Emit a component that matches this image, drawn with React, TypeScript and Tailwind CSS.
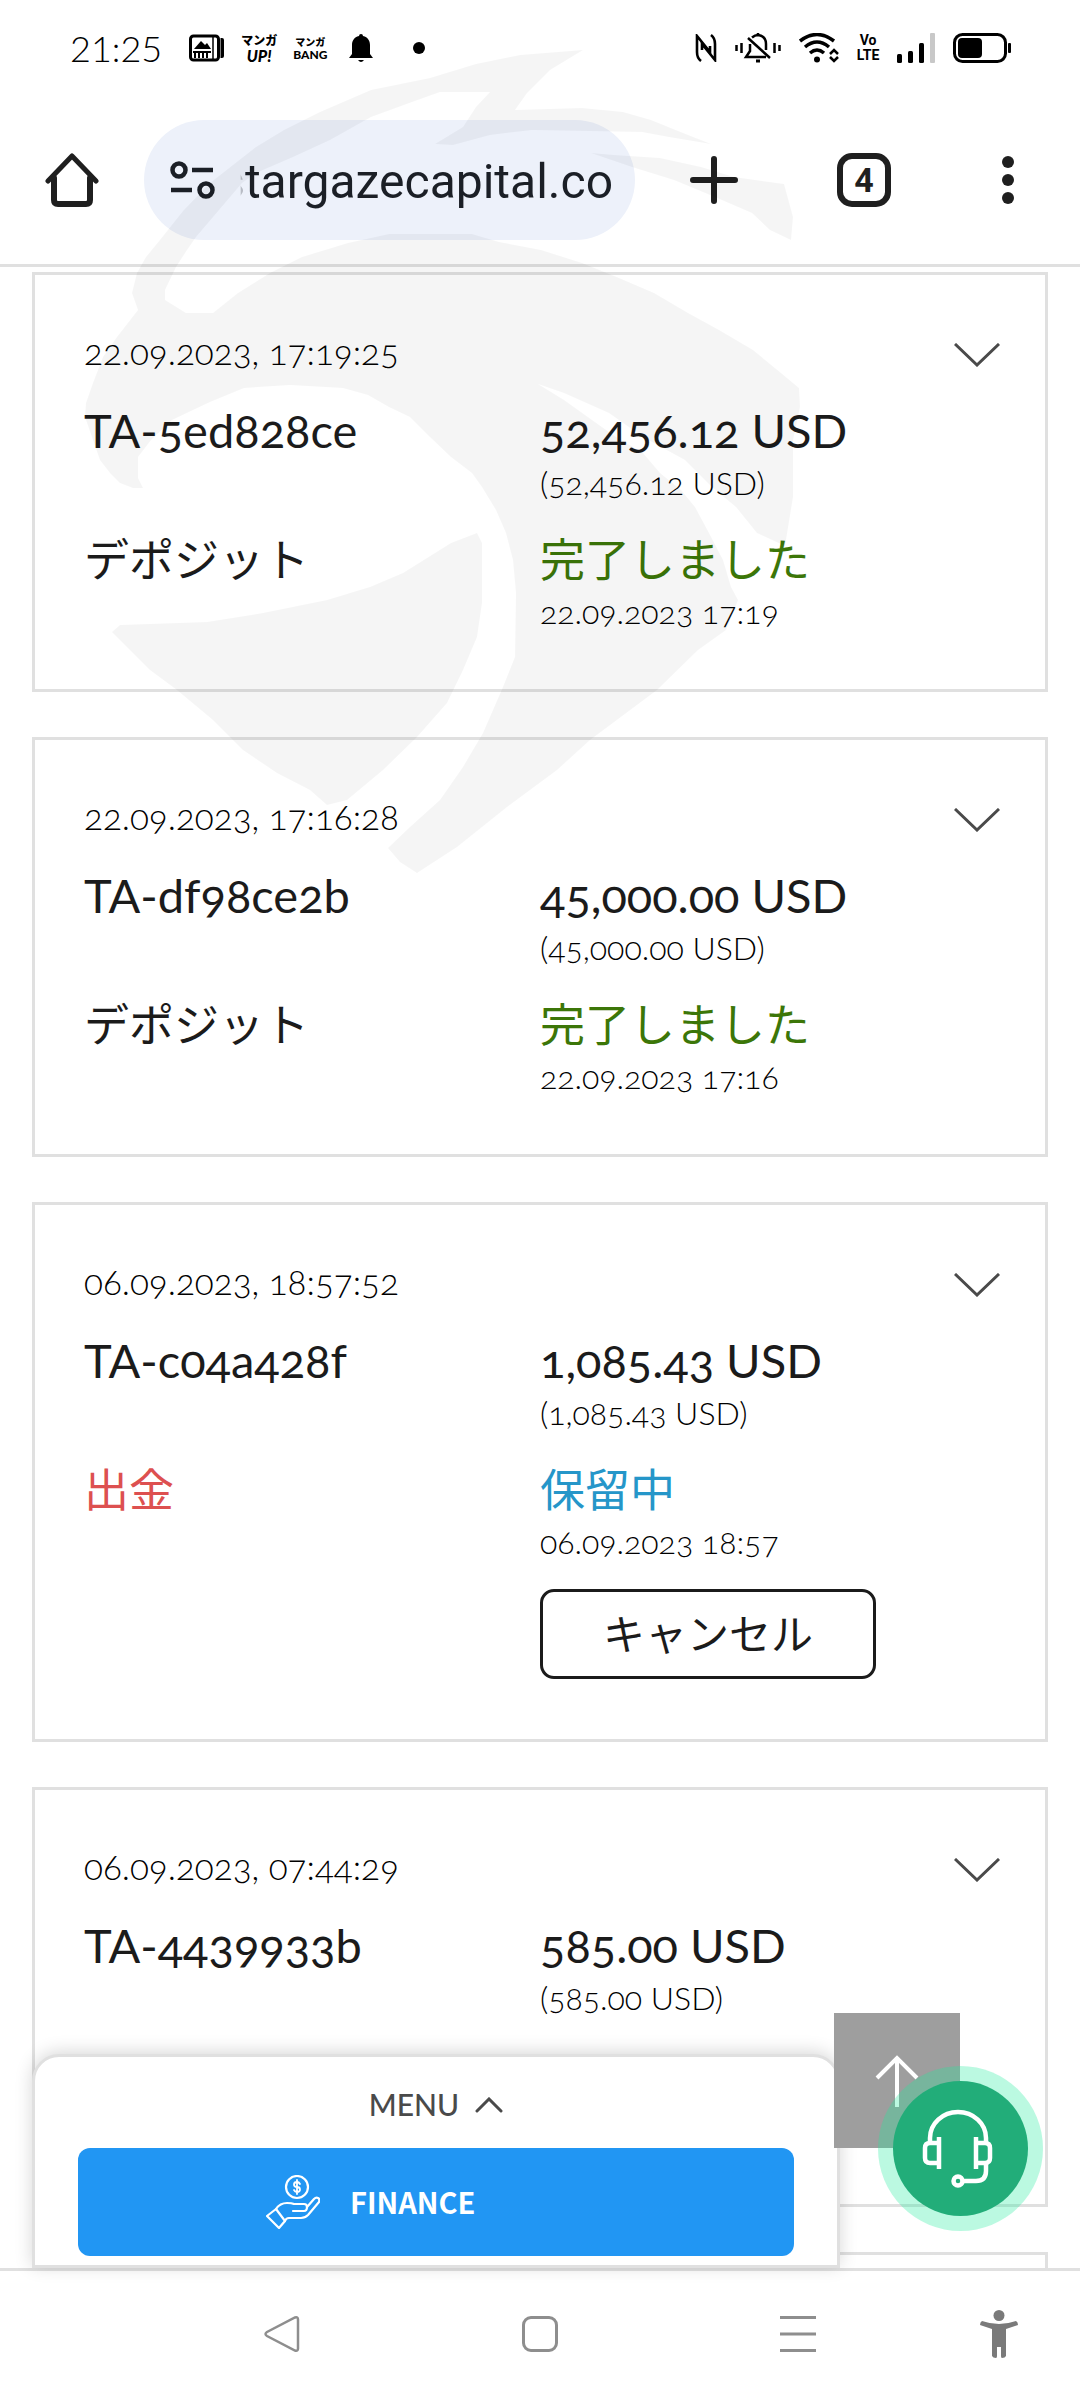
import type { ReactNode } from "react";

type Transaction = {
  date: string;
  id: string;
  amount: string;
  type?: string;
  typeColor?: string;
  status?: string;
  statusColor?: string;
  updated?: string;
  cancelable?: boolean;
};

const transactions: Transaction[] = [
  {
    date: "22.09.2023, 17:19:25",
    id: "TA-5ed828ce",
    amount: "52,456.12 USD",
    type: "デポジット",
    status: "完了しました",
    statusColor: "text-[#3c7608]",
    updated: "22.09.2023 17:19",
  },
  {
    date: "22.09.2023, 17:16:28",
    id: "TA-df98ce2b",
    amount: "45,000.00 USD",
    type: "デポジット",
    status: "完了しました",
    statusColor: "text-[#3c7608]",
    updated: "22.09.2023 17:16",
  },
  {
    date: "06.09.2023, 18:57:52",
    id: "TA-c04a428f",
    amount: "1,085.43 USD",
    type: "出金",
    typeColor: "text-[#dd5050]",
    status: "保留中",
    statusColor: "text-[#2596c9]",
    updated: "06.09.2023 18:57",
    cancelable: true,
  },
  {
    date: "06.09.2023, 07:44:29",
    id: "TA-4439933b",
    amount: "585.00 USD",
  },
];

function StatusBar() {
  return (
    <div className="flex h-24 items-center justify-between pr-[69px] pl-[70px] text-black">
      <div className="flex items-center">
        <span className="text-[36px] leading-none font-light">21:25</span>
        <svg className="ml-[27px] h-7 w-9" viewBox="0 0 36 28" fill="none">
          <rect x="1.5" y="2" width="28" height="24" rx="3" stroke="currentColor" strokeWidth="3" />
          <path d="M24 2v24" stroke="currentColor" strokeWidth="1.5" />
          <path d="M31.500 4h1.500q2 0 2 2v16q0 2-2 2h-1.500z" fill="currentColor" />
          <path d="M5 15l7-8 4 4 2-2 4 6z" fill="currentColor" />
          <path d="M4 18h18M6 18v6M10 18v6M14 18v6M18 18v6" stroke="currentColor" strokeWidth="2" />
        </svg>
        <div className="ml-4 flex flex-col items-center font-black">
          <span className="font-['Noto_Sans_CJK_JP',sans-serif] text-[12px] leading-[14px]">マンガ</span>
          <span className="text-[16px] leading-[17px] italic">UP!</span>
        </div>
        <div className="ml-4 flex flex-col items-center font-black">
          <span className="font-['Noto_Sans_CJK_JP',sans-serif] text-[10px] leading-[12px]">マンガ</span>
          <span className="text-[12px] leading-[13px]">BANG</span>
        </div>
        <svg className="ml-[22px] h-[30px] w-6" viewBox="0 0 24 30" fill="currentColor">
          <path d="M10 3a2 2 0 0 1 4 0c5 1 7 5 7 9v9l3 4H0l3-4v-9c0-4 2-8 7-9z" />
          <path d="M9 27h6q-3 4-6 0z" />
        </svg>
        <span className="ml-10 size-3 rounded-full bg-black" />
      </div>

      <div className="flex items-center gap-[18px]">
        {/* NFC */}
        <svg className="h-7 w-[22px]" viewBox="0 0 22 28" fill="none" stroke="currentColor" strokeWidth="2.600">
          <path d="M6 27q-4-3-4-9V2L15 18v-6" />
          <path d="M16 1q4 3 4 9v16L7 10v6" />
        </svg>
        {/* Vibrate, ringer off */}
        <svg className="h-[30px] w-[46px]" viewBox="0 0 46 30" fill="none" stroke="currentColor" strokeWidth="2.500">
          <path d="M1.500 12v6M6.500 10v10M39.500 10v10M44.500 12v6" />
          <path d="M13 5l22 20" />
          <path d="M17 4.500q3-2.500 6-2.500 8 1 8 9v6" />
          <path d="M15 11v7l-4 6h20" />
          <path d="M23 0v3" />
          <path d="M21 28h4" strokeWidth="3" />
        </svg>
        <svg className="h-[30px] w-10" viewBox="0 0 40 30" fill="none" stroke="currentColor" strokeWidth="3.500">
          <path d="M1 8Q18-5 35 8M6 14Q18 4 30 14M11 20Q18 14 25 20" />
          <circle cx="18" cy="26.500" r="3" fill="currentColor" stroke="none" />
          <path d="M31 21l4-4 4 4M31 24l4 4 4-4" strokeWidth="2.500" />
        </svg>
        <div className="flex w-[22px] flex-col items-center font-['Roboto',sans-serif] text-[14px] leading-[15px] font-bold">
          <span>Vo</span>
          <span>LTE</span>
        </div>
        <svg className="h-[30px] w-[38px]" viewBox="0 0 38 30" fill="currentColor">
          <rect x="0" y="21" width="5" height="9" rx="1.500" />
          <rect x="11" y="18" width="5" height="12" rx="1.500" />
          <rect x="22" y="10" width="5" height="20" rx="1.500" />
          <rect x="33" y="0" width="5" height="30" rx="1" fill="#c8c8c8" />
        </svg>
        <svg className="h-[30px] w-[58px]" viewBox="0 0 58 30" fill="currentColor">
          <rect x="1.500" y="1.500" width="51" height="27" rx="8" fill="none" stroke="currentColor" strokeWidth="3" />
          <rect x="5" y="5" width="24" height="20" rx="4" />
          <rect x="55" y="10" width="3" height="10" rx="1" />
        </svg>
      </div>
    </div>
  );
}

function Toolbar() {
  return (
    <div className="flex h-[168px] items-center text-[#1f1f1f]">
      <button aria-label="Home" className="flex w-36 justify-center">
        <svg className="size-[54px]" viewBox="0 0 54 54" fill="none" stroke="currentColor" strokeLinecap="round" strokeLinejoin="round">
          <path d="M3 28L27 3l24 25" strokeWidth="5" />
          <path d="M9 25v22q0 4 4 4h28q4 0 4-4V25" strokeWidth="6" />
        </svg>
      </button>
      <div className="flex h-[120px] min-w-0 flex-1 items-center gap-6 rounded-full bg-[#edf1fa] pr-[22px] pl-[26px]">
        <button aria-label="Site settings">
          <svg className="h-[38px] w-[46px]" viewBox="0 0 46 38" fill="none" stroke="#1b1f26" strokeWidth="4.500">
            <circle cx="9" cy="9" r="6.500" />
            <circle cx="36" cy="29" r="6.500" />
            <path d="M22 9h21M1 29h21" />
          </svg>
        </button>
        <input
          aria-label="Address"
          dir="rtl"
          readOnly
          value="stargazecapital.co"
          className="h-16 w-full min-w-0 [mask-image:linear-gradient(to_right,transparent,black_6px)] pt-[3px] font-['Roboto',sans-serif] text-[48px] text-[#1b1f26] outline-none"
        />
      </div>
      <button aria-label="New tab" className="flex w-[158px] justify-center">
        <svg className="size-12" viewBox="0 0 48 48" stroke="currentColor" strokeWidth="6" strokeLinecap="round">
          <path d="M24 3v42M3 24h42" />
        </svg>
      </button>
      <button aria-label="Tabs" className="flex w-[142px] justify-center">
        <span className="flex size-[54px] items-center justify-center rounded-[15px] border-[6px] border-[#1f1f1f] font-['Roboto',sans-serif] text-[34px] leading-none font-bold">
          4
        </span>
      </button>
      <button aria-label="More" className="flex w-[145px] flex-col items-center gap-[6px]">
        <span className="size-3 rounded-full bg-[#1f1f1f]" />
        <span className="size-3 rounded-full bg-[#1f1f1f]" />
        <span className="size-3 rounded-full bg-[#1f1f1f]" />
      </button>
    </div>
  );
}

function TransactionCard({ tx }: { tx: Transaction }) {
  return (
    <article className="min-h-[420px] border-[3px] border-[#e0e0e0] px-[49px] pt-[54px] pb-[53px] text-[#1b1b1b] oldstyle-nums">
      <div className="flex h-12 items-start justify-between">
        <time className="text-[35px] leading-[44px] font-light text-black">{tx.date}</time>
        <button aria-label="Expand" className="-mr-1 pt-[14px]">
          <svg className="h-6 w-[46px]" viewBox="0 0 46 24" fill="none" stroke="#4a4a4a" strokeWidth="3">
            <path d="M1 1l22 21L45 1" />
          </svg>
        </button>
      </div>
      <div className="mt-6 grid grid-cols-2">
        <p className="text-[47px] leading-[58px]">{tx.id}</p>
        <div>
          <p className="text-[47px] leading-[58px]">{tx.amount}</p>
          <p className="text-[32px] leading-[48px] font-light text-black">({tx.amount})</p>
        </div>
      </div>
      {tx.status && (
        <div className="mt-[21px] grid grid-cols-2">
          <p className={`font-['Noto_Sans_CJK_JP',sans-serif] text-[45px] leading-[60px] ${tx.typeColor ?? ""}`}>
            {tx.type}
          </p>
          <div>
            <p className={`font-['Noto_Sans_CJK_JP',sans-serif] text-[45px] leading-[60px] ${tx.statusColor ?? ""}`}>
              {tx.status}
            </p>
            <p className="text-[32px] leading-[48px] font-light text-black">{tx.updated}</p>
            {tx.cancelable && (
              <button className="mt-[23px] mb-[7px] flex h-[90px] w-[336px] items-center justify-center rounded-[14px] border-[3px] border-[#1b1b1b] pb-[6px] font-['Noto_Sans_CJK_JP',sans-serif] text-[42px]">
                キャンセル
              </button>
            )}
          </div>
        </div>
      )}
    </article>
  );
}

function MenuSheet() {
  return (
    <div className="absolute right-[240px] bottom-0 left-8 rounded-t-[27px] border-[3px] border-[#e0e0e0] bg-white px-[43px] pb-[9px] shadow-[0_-2px_18px_rgba(0,0,0,0.16)]">
      <button className="flex h-[91px] w-full items-center justify-center gap-4 pt-1 text-[30px] font-medium text-[#4a4a4a]">
        MENU
        <svg className="h-4 w-7" viewBox="0 0 28 16" fill="none" stroke="currentColor" strokeWidth="3" strokeLinecap="round">
          <path d="M2 14L14 2l12 12" />
        </svg>
      </button>
      <button className="flex h-[108px] w-full items-center gap-[30px] rounded-[12px] bg-[#2196f3] pl-[188px] text-white">
        <svg className="size-[54px]" viewBox="0 0 54 54" fill="none" stroke="currentColor" strokeWidth="2.200" strokeLinejoin="round" strokeLinecap="round">
          <circle cx="31" cy="12" r="11" />
          <path d="M34 9q-1-2-3-2-3 0-3 2.500t3 2.500q3 0 3 2.500t-3 2.500q-2 0-3-2M31 5v14" strokeWidth="1.800" />
          <path d="M1 41l9-7 9 12-6 7z" />
          <path d="M10 34q4-6 11-6 5 0 7 1h10q3 0 3 3 0 4-3 4H27" />
          <path d="M41 32l7-8q2-2 4-1t1 4L42 40q-3 3-7 3H23q-3 0-4 3" />
        </svg>
        <span className="font-['Noto_Sans_CJK_JP',sans-serif] text-[29px] font-bold">FINANCE</span>
      </button>
    </div>
  );
}

function SupportButton() {
  return (
    <button
      aria-label="Support"
      className="absolute right-[37px] bottom-[37px] flex size-[165px] items-center justify-center rounded-full bg-[#1deb9a]/30"
    >
      <span className="flex size-[135px] items-center justify-center rounded-full bg-[#22ad79]">
        <svg className="size-[135px]" viewBox="0 0 135 135" fill="none" stroke="white" strokeWidth="4.500" strokeLinejoin="round">
          <path d="M37 62v-5a28 26 0 0 1 56 0v5" />
          <path d="M46 56v32M83 56v32" />
          <path d="M46 62h-9q-5 0-5 5v10q0 5 5 5h9M83 62h9q5 0 5 5v10q0 5-5 5h-9" />
          <path d="M93 83v7q0 10-10 10H70" />
          <circle cx="65" cy="100" r="4.500" />
        </svg>
      </span>
    </button>
  );
}

function NavButton({ label, children }: { label: string; children: ReactNode }) {
  return (
    <button aria-label={label} className="flex items-center justify-center">
      {children}
    </button>
  );
}

function NavigationBar() {
  return (
    <nav className="grid h-[132px] shrink-0 grid-cols-[153fr_258fr_258fr_258fr_143fr_10fr] border-t-[3px] border-[#e0e0e0] bg-white pb-1 text-[#8e8e8e]">
      <span />
      <NavButton label="Back">
        <svg className="size-9" viewBox="0 0 36 36" fill="none" stroke="currentColor" strokeWidth="2.500">
          <path d="M31 1.500q3-1 3 2v29q0 3-3 2L3 20q-3-2 0-4z" />
        </svg>
      </NavButton>
      <NavButton label="Home screen">
        <span className="size-9 rounded-[9px] border-[3px] border-[#8e8e8e]" />
      </NavButton>
      <NavButton label="Recents">
        <svg className="size-9" viewBox="0 0 36 36" stroke="currentColor" strokeWidth="3">
          <path d="M0 1.500h36M0 18h36M0 34.500h36" />
        </svg>
      </NavButton>
      <NavButton label="Accessibility">
        <svg className="h-12 w-[38px]" viewBox="0 0 38 48" fill="#7a7a7a">
          <circle cx="19" cy="5.500" r="5.500" />
          <path d="M2 11q17 6 34 0 2 1 2 4l-12 4v27q-1 2-4 2-1 0-1-2v-9h-4v9q0 2-1 2-3 0-4-2V19L0 15q0-3 2-4z" />
        </svg>
      </NavButton>
    </nav>
  );
}

// Hawk head emblem, laid over the top of the page
function Watermark() {
  return (
    <svg
      aria-hidden="true"
      className="pointer-events-none absolute top-0 left-0 w-full"
      viewBox="0 0 1080 900"
      fill="black"
      fillOpacity="0.038"
    >
      <path d="M583 50L520 55L476 64L430 78L371 90L320 112L284 130L256 147L210 183L183 211L160 240L146 257L137 273L132 293L138 310L117 337L103 357L93 383L86 403L85 417L93 440L100 460L110 473L120 483L133 488L143 488L138 478L138 457L151 440L172 420L193 410L210 402L244 388L290 385L343 388L368 395L389 407L410 417L430 437L451 457L472 473L482 487L496 510L506 533L513 560L516 593L515 657L503 687L483 733L463 767L440 800L410 827L388 848L400 862L417 873L457 847L507 807L557 770L590 740L657 690L698 650L726 630L738 600L731 587L723 560L709 533L695 507L681 490L660 473L643 453L616 437L592 420L564 400L538 384L564 393L609 413L643 437L685 460L712 487L736 507L757 533L785 546L793 497L793 440L800 407L799 388L781 373L753 350L719 330L688 313L654 293L619 278L582 263L541 250L499 242L472 234L389 234L348 243L302 257L270 273L238 293L213 313L186 313L165 300L165 290L176 267L187 250L196 237L219 210L242 183L256 173L293 157L330 140L371 117L412 102L440 92L490 92L476 107L463 127L435 144L453 145L490 135L532 130L642 132L669 137L711 144L683 133L651 120L623 112L582 108L515 110L527 93L550 70Z" />
      <path d="M591 153L614 155L660 158L701 167L734 177L784 184L793 217L791 240L770 230L752 213L715 197L674 180L632 167Z" />
      <path d="M112 632L120 625L207 622L263 613L327 600L370 587L403 573L451 543L477 533L482 543L482 603L477 637L463 670L447 703L417 737L383 770L347 800L327 805L310 790L277 773L243 750L213 720L177 690L150 670L130 650Z" />
    </svg>
  );
}

export default function App() {
  return (
    <div className="relative flex h-screen flex-col overflow-hidden bg-white font-['Lato',sans-serif]">
      <header className="shrink-0 border-b-[3px] border-[#e0e0e0]">
        <StatusBar />
        <Toolbar />
      </header>

      <div className="relative min-h-0 flex-1">
        <main className="h-full space-y-[45px] overflow-y-auto px-8 pt-[5px] [scrollbar-width:none]">
          {transactions.map((tx) => (
            <TransactionCard key={tx.id} tx={tx} />
          ))}
          <div className="h-[420px] border-[3px] border-[#e0e0e0]" />
        </main>
        <MenuSheet />
        <button
          aria-label="Back to top"
          className="absolute right-[120px] bottom-[120px] flex h-[135px] w-[126px] items-center justify-center bg-[#9e9e9e]"
        >
          <svg className="h-[52px] w-11" viewBox="0 0 44 52" fill="none" stroke="white" strokeWidth="4">
            <path d="M22 2v50M2 23L22 3l20 20" />
          </svg>
        </button>
        <SupportButton />
      </div>

      <NavigationBar />
      <Watermark />
    </div>
  );
}
